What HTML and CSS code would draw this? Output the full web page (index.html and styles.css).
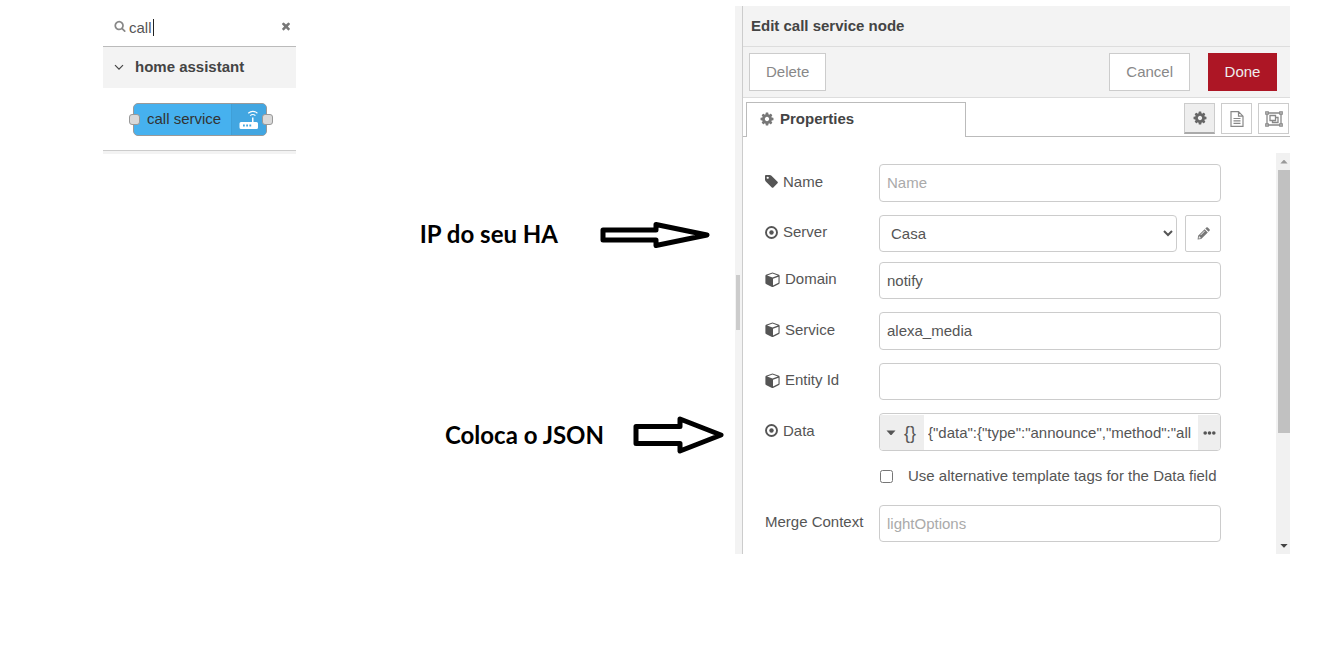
FILE: index.html
```html
<!DOCTYPE html>
<html lang="en">
<head>
<meta charset="utf-8">
<title>Edit call service node</title>
<link rel="stylesheet" href="styles.css">
</head>
<body>
<svg class="sprite" aria-hidden="true">
  <symbol id="i-cog" viewBox="64 64 1664 1664"><path d="M1152 896q0-106-75-181t-181-75-181 75-75 181 75 181 181 75 181-75 75-181zm512-109v222q0 12-8 23t-20 13l-185 28q-19 54-39 91 35 50 107 138 10 12 10 25t-9 23q-27 37-99 108t-94 71q-12 0-26-9l-138-108q-44 23-91 38-16 136-29 186-7 28-36 28h-222q-14 0-24.5-8.5t-11.5-21.5l-28-184q-49-16-90-37l-141 107q-10 9-25 9-14 0-25-11-126-114-165-168-7-10-7-23 0-12 8-23 15-21 51-66.5t54-70.5q-27-50-41-99l-183-27q-13-2-21-12.5t-8-23.5v-222q0-12 8-23t19-13l186-28q14-46 39-92-40-57-107-138-10-12-10-24 0-10 9-23 26-36 98.5-107.5t94.5-71.5q13 0 26 10l138 107q44-23 91-38 16-136 29-186 7-28 36-28h222q14 0 24.5 8.5t11.5 21.5l28 184q49 16 90 37l142-107q9-9 24-9 13 0 25 10 129 119 165 170 7 8 7 22 0 12-8 23-15 21-51 66.5t-54 70.5q26 50 41 98l183 28q13 2 21 12.5t8 23.5z"/></symbol>
  <symbol id="i-search" viewBox="0 0 1792 1792"><path d="M1216 832q0-185-131.5-316.5t-316.5-131.5-316.5 131.5-131.5 316.5 131.5 316.5 316.5 131.5 316.5-131.5 131.5-316.5zm512 832q0 52-38 90t-90 38q-54 0-90-38l-343-342q-179 124-399 124-143 0-273.5-55.5t-225-150-150-225-55.5-273.5 55.5-273.5 150-225 225-150 273.5-55.5 273.5 55.5 225 150 150 225 55.5 273.5q0 220-124 399l343 343q37 37 37 90z"/></symbol>
  <symbol id="i-times" viewBox="0 0 1792 1792"><path d="M1490 1322q0 40-28 68l-136 136q-28 28-68 28t-68-28l-294-294-294 294q-28 28-68 28t-68-28l-136-136q-28-28-28-68t28-68l294-294-294-294q-28-28-28-68t28-68l136-136q28-28 68-28t68 28l294 294 294-294q28-28 68-28t68 28l136 136q28 28 28 68t-28 68l-294 294 294 294q28 28 28 68z"/></symbol>
  <symbol id="i-tag" viewBox="128 128 1536 1536"><path d="M576 448q0-53-37.5-90.5t-90.5-37.5-90.5 37.5-37.5 90.5 37.5 90.5 90.5 37.5 90.5-37.5 37.5-90.5zm1067 576q0 53-37 90l-491 492q-39 37-91 37-53 0-90-37l-715-716q-38-37-64.5-101t-26.5-117v-416q0-52 38-90t90-38h416q53 0 117 26.5t102 64.5l715 714q37 39 37 91z"/></symbol>
  <symbol id="i-dot" viewBox="0 0 13 13"><circle cx="6.5" cy="6.5" r="5.5" fill="none" stroke="currentColor" stroke-width="1.9"/><circle cx="6.5" cy="6.5" r="2.2"/></symbol>
  <symbol id="i-cube" viewBox="0 0 15 15"><path fill-rule="evenodd" d="M7.5.5 14 2.8q.6.3.6 1v7.1q0 .7-.6 1l-6 3q-.5.2-1 0l-6-3q-.6-.3-.6-1V3.800q0-.7.6-1zM7.500 1.600 2.100 3.600 7.500 5.600l5.400-2zM8 13.500l5.500-2.700V4.700L8 6.800z"/></symbol>
  <symbol id="i-pencil" viewBox="0 0 13 13"><path fill-rule="evenodd" d="M7.600 2.200 10.800 5.400 4.200 12 .6 12.500 1.100 8.700zM1.900 9.500 1.600 11.500 3.600 11.200 4 10.400H2.700V9.200zM7.400 3.800 3.400 7.800l.4.4L7.800 4.200zM8.300 1.500 9.300.6q.8-.6 1.500 0l1.700 1.700q.6.700 0 1.500l-1 1z"/></symbol>
  <symbol id="i-file" viewBox="0 0 14 16"><path fill="none" stroke="currentColor" stroke-width="1.200" d="M1 .7h7.500L13 5.200v10.100H1zM8.500.7v4.500H13M3.500 7.500h7M3.500 9.900h7M3.500 12.300h7"/></symbol>
  <symbol id="i-group" viewBox="0 0 18 16"><g fill="none" stroke="currentColor" stroke-width="1.300"><path d="M3 2h12M3 14h12M2 3v10M16 3v10M5 4.500h5.500v5H5zM10.500 6.500H13v5H7.500v-2"/><path d="M.8.800h2.400v2.400H.8zM14.800.8h2.400v2.400h-2.400zM.8 12.800h2.400v2.400H.8zM14.800 12.800h2.400v2.400h-2.400z"/></g></symbol>
  <symbol id="i-angle" viewBox="0 0 10 10"><path fill="none" stroke="currentColor" stroke-width="1.200" d="M1 3.200 5 7.200 9 3.200"/></symbol>
  <symbol id="i-caret" viewBox="0 0 10 6"><path d="M.5.500h9L5.500 5h-1z"/></symbol>
  <symbol id="i-dots" viewBox="0 0 13 4"><circle cx="2.200" cy="2" r="1.800"/><circle cx="6.500" cy="2" r="1.800"/><circle cx="10.800" cy="2" r="1.800"/></symbol>
  <symbol id="i-router" viewBox="0 0 20 20"><path fill-rule="evenodd" d="M2 12h11V7.500h1.500V12H17.500q1.500 0 1.500 1.500v4q0 1.500-1.500 1.500H2Q.5 19 .5 17.500v-4Q.5 12 2 12zM4 14.500v2h1.800v-2zM7.200 14.500v2H9v-2zM10.400 14.500v2h1.800v-2z"/><path fill="none" stroke="currentColor" stroke-width="1.200" d="M9.200 3.200q4.600-3.800 9.200 0M11.200 5.600q2.600-2.200 5.200 0"/></symbol>
</svg>

<div class="page">
  <aside class="palette">
    <div class="search">
      <svg class="icon-12"><use href="#i-search"/></svg>
      <input class="search-input" type="text" value="call" aria-label="Filter nodes">
      <span class="caret"></span>
      <button class="clear" aria-label="Clear"><svg class="icon-12"><use href="#i-times"/></svg></button>
    </div>
    <button class="category"><svg class="icon-10"><use href="#i-angle"/></svg>home assistant</button>
    <div class="nodes">
      <div class="node">
        <span class="port port-in"></span>
        <span class="node-label">call service</span>
        <span class="node-icon"><svg class="icon-20"><use href="#i-router"/></svg></span>
        <span class="port port-out"></span>
      </div>
    </div>
    <div class="palette-end"></div>
  </aside>

  <div class="notes">
    <div class="note note-server">
      <span>IP do seu HA</span>
      <svg width="112" height="28" viewBox="0 0 112 28"><path class="arrow" d="M4 10h53V4.500L108 15 57 25.500V20H4z"/></svg>
    </div>
    <div class="note note-json">
      <span>Coloca o JSON</span>
      <svg width="93" height="40" viewBox="0 0 93 40"><path class="arrow" d="M4 11.500h44V4L89 20 48 36V28.500H4z"/></svg>
    </div>
  </div>

  <main class="tray">
    <div class="grip"><span class="grip-thumb"></span></div>
    <div class="editor">
      <h1 class="title">Edit call service node</h1>
      <div class="toolbar">
        <button class="btn">Delete</button>
        <span class="spacer"></span>
        <button class="btn">Cancel</button>
        <button class="btn btn-done">Done</button>
      </div>
      <div class="tabs">
        <button class="tab"><svg class="icon-14"><use href="#i-cog"/></svg>Properties</button>
        <div class="views">
          <button class="view view-on" aria-label="Properties"><svg class="icon-14"><use href="#i-cog"/></svg></button>
          <button class="view" aria-label="Description"><svg class="icon-file"><use href="#i-file"/></svg></button>
          <button class="view" aria-label="Appearance"><svg class="icon-group"><use href="#i-group"/></svg></button>
        </div>
      </div>
      <div class="content">
        <form class="form">
          <div class="row row-name">
            <label for="name"><svg class="icon-13"><use href="#i-tag"/></svg>Name</label>
            <input class="field" id="name" type="text" placeholder="Name">
          </div>
          <div class="row row-server">
            <label for="server"><svg class="icon-13"><use href="#i-dot"/></svg>Server</label>
            <select class="field" id="server"><option>Casa</option></select>
            <button type="button" class="edit" aria-label="Edit server"><svg class="icon-13"><use href="#i-pencil"/></svg></button>
          </div>
          <div class="row row-short">
            <label for="domain"><svg class="icon-15"><use href="#i-cube"/></svg>Domain</label>
            <input class="field" id="domain" type="text" value="notify">
          </div>
          <div class="row">
            <label for="service"><svg class="icon-15"><use href="#i-cube"/></svg>Service</label>
            <input class="field" id="service" type="text" value="alexa_media">
          </div>
          <div class="row row-short">
            <label for="entity"><svg class="icon-15"><use href="#i-cube"/></svg>Entity Id</label>
            <input class="field" id="entity" type="text">
          </div>
          <div class="row">
            <label for="data"><svg class="icon-13"><use href="#i-dot"/></svg>Data</label>
            <div class="field typed">
              <button type="button" class="type"><svg class="icon-caret"><use href="#i-caret"/></svg><span>{}</span></button>
              <input class="typed-input" id="data" type="text" value='{"data":{"type":"announce","method":"all'>
              <button type="button" class="more" aria-label="Expand"><svg class="icon-dots"><use href="#i-dots"/></svg></button>
            </div>
          </div>
          <div class="check">
            <input type="checkbox" id="alt">
            <label for="alt">Use alternative template tags for the Data field</label>
          </div>
          <div class="row row-short">
            <label for="merge">Merge Context</label>
            <input class="field" id="merge" type="text" placeholder="lightOptions">
          </div>
        </form>
        <div class="scrollbar">
          <svg class="scroll-arrow scroll-up"><use href="#i-caret"/></svg>
          <span class="scroll-thumb"></span>
          <svg class="scroll-arrow"><use href="#i-caret"/></svg>
        </div>
      </div>
    </div>
  </main>
</div>
</body>
</html>
```
FILE: styles.css
```css
* { box-sizing: border-box; }

body {
  margin: 0;
  background: #fff;
  color: #555;
  font: 15px/20px "Liberation Sans", Arial, sans-serif;
}

button, input, select { font: inherit; color: inherit; margin: 0; }
button { padding: 0; border: 0; background: none; }
input, select { min-width: 0; outline: 0; }
svg { display: block; flex: none; fill: currentColor; }

.sprite { position: absolute; width: 0; height: 0; }
.icon-10 { width: 10px; height: 10px; }
.icon-12 { width: 12px; height: 12px; }
.icon-13 { width: 13px; height: 13px; }
.icon-14 { width: 14px; height: 14px; }
.icon-15 { width: 15px; height: 15px; }
.icon-20 { width: 20px; height: 20px; }
.icon-file { width: 14px; height: 16px; }
.icon-group { width: 18px; height: 16px; }
.icon-caret { width: 10px; height: 6px; }
.icon-dots { width: 13px; height: 4px; }

.page {
  display: grid;
  grid-template-columns: minmax(0, 193fr) minmax(0, 439fr) minmax(0, 555fr);
  align-items: start;
  padding: 6px 49px 0 103px;
}

/* Palette */
.search {
  position: relative;
  display: flex;
  align-items: center;
  height: 41px;
  padding: 0 4px 0 11px;
  border-bottom: 1px solid #bbb;
  color: #888;
}
.search-input {
  flex: 1;
  height: 36px;
  padding: 3px 0 0 3px;
  border: 0;
  background: none;
  color: #555;
}
.caret { position: absolute; left: 50px; top: 13px; width: 1px; height: 17px; background: #222; }
.clear { color: #777; }
.category {
  display: flex;
  align-items: center;
  gap: 11px;
  width: 100%;
  height: 41px;
  padding: 0 11px 2px;
  background: #f3f3f3;
  color: #444;
  font-weight: bold;
}
.nodes { padding: 15px 29px 14px 30px; }
.node {
  position: relative;
  display: flex;
  height: 33px;
  border: 1px solid #999;
  border-radius: 5px;
  background: #46b1ef;
  color: #333;
}
.node-label { flex: 1; padding: 5px 0 0 13px; white-space: nowrap; }
.node-icon {
  display: flex;
  align-items: center;
  justify-content: center;
  width: 35px;
  border-left: 1px solid #3f9fd7;
  border-radius: 0 4px 4px 0;
  background: #42a6e1;
  color: #fff;
}
.port {
  position: absolute;
  top: 10px;
  width: 11px;
  height: 11px;
  border: 1px solid #999;
  border-radius: 3px;
  background: #d9d9d9;
}
.port-in { left: -5px; }
.port-out { right: -7px; }
.palette-end { height: 4px; border-top: 1px solid #ccc; background: #f3f3f3; }

/* Callouts */
.notes { display: grid; gap: 161px; padding-top: 208px; }
.note {
  display: flex;
  align-items: center;
  justify-content: flex-end;
  height: 40px;
  color: #000;
  font: bold 24px/40px Lato, sans-serif;
  white-space: nowrap;
}
.note-server { gap: 41px; padding-right: 24px; }
.note-json { gap: 28px; padding-right: 10px; }
.arrow { fill: #fff; stroke: #000; stroke-width: 5; stroke-linejoin: round; }

/* Editor tray */
.tray { display: flex; }
.grip {
  flex: none;
  display: flex;
  align-items: center;
  width: 8px;
  padding: 44px 0 0 1px;
  border-right: 1px solid #ccc;
  background: #f3f3f3;
}
.grip-thumb { width: 4px; height: 55px; background: #ccc; }
.editor { flex: 1; min-width: 0; }
.title {
  margin: 0;
  height: 41px;
  padding: 10px 8px;
  border-bottom: 1px solid #ddd;
  background: #f3f3f3;
  color: #444;
  font-size: 15px;
}
.toolbar {
  display: flex;
  align-items: center;
  height: 51px;
  padding: 0 13px 0 6px;
  border-bottom: 1px solid #ddd;
  background: #f3f3f3;
}
.spacer { flex: 1; }
.btn {
  height: 38px;
  padding: 0 16px;
  border: 1px solid #ccc;
  background: #fff;
  color: #888;
}
.btn-done { min-width: 69px; margin-left: 18px; border-color: #ad1625; padding: 0 15px; background: #ad1625; color: #eee; }

.tabs {
  display: flex;
  align-items: flex-end;
  justify-content: space-between;
  height: 39px;
  padding: 0 1px 0 3px;
  background: linear-gradient(#bbb, #bbb) bottom / 100% 1px no-repeat;
}
.tab {
  display: flex;
  align-items: center;
  gap: 6px;
  width: 220px;
  height: 35px;
  padding: 0 13px 2px;
  border: 1px solid #bbb;
  border-bottom: 0;
  background: #fff;
  color: #444;
  font-weight: bold;
}
.tab svg { color: #777; }
.views { display: flex; gap: 6px; padding-bottom: 3px; }
.view {
  display: flex;
  align-items: center;
  justify-content: center;
  width: 31px;
  height: 31px;
  border: 1px solid #ccc;
  color: #888;
}
.view-on { border-bottom: 2px solid #aaa; background: #eee; color: #666; }

.content { display: flex; padding-top: 16px; }
.form { flex: 1; min-width: 0; padding: 11px 55px 12px 22px; }
.row { display: flex; min-height: 38px; margin-bottom: 13px; }
.row-short { min-height: 37px; }
.row-server { min-height: 37px; margin-bottom: 10px; }
.row:last-child { margin-bottom: 0; }
.row > label {
  flex: none;
  display: flex;
  align-items: center;
  gap: 5px;
  width: 114px;
  padding-bottom: 3px;
  white-space: nowrap;
}
.field {
  flex: 1;
  padding: 0 7px;
  border: 1px solid #ccc;
  border-radius: 4px;
  background: #fff;
}
::placeholder { color: #aaa; opacity: 1; }
.edit {
  display: flex;
  align-items: center;
  justify-content: center;
  width: 36px;
  margin-left: 8px;
  border: 1px solid #ccc;
  border-radius: 2px;
  color: #777;
}
.typed { display: flex; min-width: 0; padding: 1px 0 0; overflow: hidden; }
.type {
  display: flex;
  align-items: center;
  gap: 8px;
  width: 44px;
  padding-left: 6px;
  background: #eee;
}
.type span { font-size: 18px; }
.typed-input { flex: 1; padding: 0 0 0 4px; border: 0; background: none; }
.more { display: flex; align-items: center; justify-content: center; width: 22px; background: #eee; }
.check { display: flex; align-items: center; gap: 15px; height: 24px; margin: 0 0 17px 115px; white-space: nowrap; }
.check input { flex: none; width: 13px; height: 13px; }

.scrollbar {
  display: flex;
  flex-direction: column;
  justify-content: space-between;
  align-items: flex-end;
  width: 14px;
  background: #f1f1f1;
}
.scroll-arrow { width: 10px; height: 16px; margin-right: 1px; padding: 5px 1px; color: #444; }
.scroll-up { height: 17px; color: #999; transform: rotate(180deg); }
.scroll-thumb { width: 12px; height: 263px; margin-bottom: auto; background: #c1c1c1; }
```
